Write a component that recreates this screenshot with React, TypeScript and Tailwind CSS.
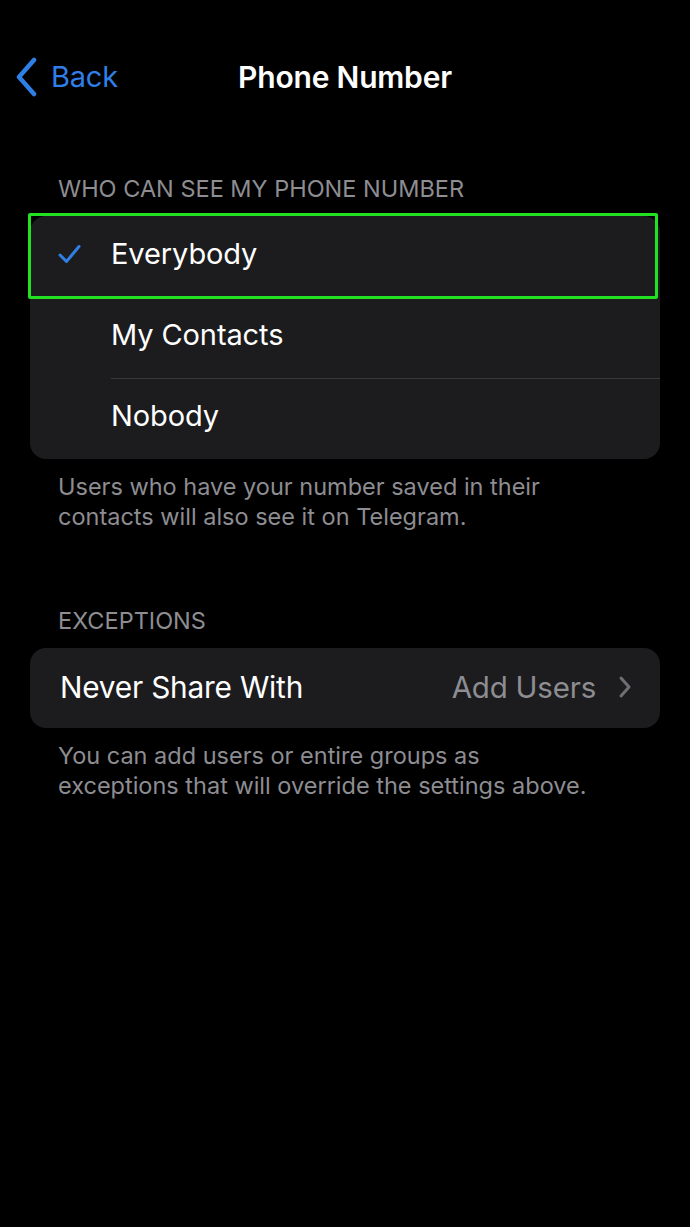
import React from "react";

const font = { fontFamily: "Inter, 'Noto Sans', sans-serif" };

export default function App() {
  return (
    <div className="w-[690px] h-[1227px] bg-black text-white overflow-hidden" style={font}>
      {/* nav */}
      <div className="relative h-[156px] flex items-start pt-[57px]">
        <div className="flex items-center pl-[14px] text-[#2f7fe6]">
          <svg width="24" height="40" viewBox="0 0 24 40" fill="none">
            <path d="M20 3 L5 20 L20 37" stroke="#2f7fe6" strokeWidth="4.5" strokeLinecap="round" strokeLinejoin="round" />
          </svg>
          <span className="ml-[13px] text-[29px] leading-[40px] tracking-[-0.2px]">Back</span>
        </div>
        <div className="absolute left-0 right-0 top-[57px] text-center text-[30px] leading-[40px] font-semibold tracking-[-0.2px]">
          Phone Number
        </div>
      </div>

      {/* section 1 */}
      <div className="pl-[58px] text-[23.5px] leading-[30px] text-[#8d8d92] mt-[18px]">
        WHO CAN SEE MY PHONE NUMBER
      </div>
      <div className="mx-[30px] mt-[12px] rounded-[16px] bg-[#1c1c1e] relative">
        <div className="h-[81px] flex items-center relative pb-[6px]">
          <div className="absolute left-[-2px] right-[2px] top-[-3px] bottom-[-2px] border-[3px] border-[#22e022] rounded-[2px]" />
          <svg className="ml-[28px]" width="23" height="20" viewBox="0 0 23 20" fill="none">
            <path d="M2 11 L8.5 17.5 L21 2.5" stroke="#2f7fe6" strokeWidth="3" strokeLinecap="round" strokeLinejoin="round" />
          </svg>
          <span className="ml-[30px] text-[29px] tracking-[-0.1px]">Everybody</span>
        </div>
        <div className="h-[81px] flex items-center pl-[81px] pb-[6px] text-[29px] tracking-[-0.1px]">My Contacts</div>
        <div className="ml-[81px] h-px bg-[#38383a]" />
        <div className="h-[80px] flex items-center pl-[81px] pb-[6px] text-[29px] tracking-[-0.1px]">Nobody</div>
      </div>
      <div className="pl-[58px] pr-[20px] mt-[13px] text-[23.5px] leading-[30px] text-[#8d8d92]">
        Users who have your number saved in their
        <br />
        contacts will also see it on Telegram.
      </div>

      {/* section 2 */}
      <div className="pl-[58px] mt-[74px] text-[23.5px] leading-[30px] text-[#8d8d92]">
        EXCEPTIONS
      </div>
      <div className="mx-[30px] mt-[12px] h-[80px] rounded-[16px] bg-[#1c1c1e] flex items-center pl-[30px] pr-[28px] pb-[2px]">
        <span className="text-[29.8px] tracking-[-0.2px]">Never Share With</span>
        <span className="ml-auto text-[29.5px] tracking-[-0.2px] text-[#8d8d92]">Add Users</span>
        <svg className="ml-[22px]" width="14" height="24" viewBox="0 0 14 24" fill="none">
          <path d="M3 3 L11 12 L3 21" stroke="#6e6e73" strokeWidth="3" strokeLinecap="round" strokeLinejoin="round" />
        </svg>
      </div>
      <div className="pl-[58px] pr-[20px] mt-[13px] text-[23.5px] leading-[30px] text-[#8d8d92]">
        You can add users or entire groups as
        <br />
        exceptions that will override the settings above.
      </div>
    </div>
  );
}
